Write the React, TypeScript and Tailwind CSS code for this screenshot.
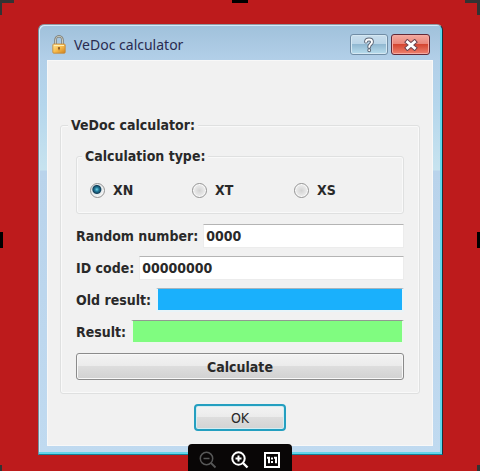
import { useState } from 'react'
import type { ReactNode } from 'react'

const TYPES = ['XN', 'XT', 'XS']

function LockIcon() {
  return (
    <svg width="14" height="19" viewBox="0 0 14 19" aria-hidden="true">
      <defs>
        <linearGradient id="lock-body" x1="0" y1="0" x2="1" y2="1">
          <stop offset="0" stopColor="#ffe9a0" />
          <stop offset="0.5" stopColor="#f7bc4c" />
          <stop offset="1" stopColor="#cf7f1c" />
        </linearGradient>
      </defs>
      <path d="M3.5 10V5a3.5 3.8 0 0 1 7 0v5" fill="none" stroke="#77776f" strokeWidth="2.4" />
      <path d="M3.5 10V5a3.5 3.8 0 0 1 7 0v5" fill="none" stroke="#d3d5c9" strokeWidth="0.9" />
      <rect x="0.8" y="9" width="12.4" height="9.2" rx="1" fill="url(#lock-body)" stroke="#c48734" strokeWidth="0.8" />
      <path d="M2 10.5h10" stroke="#fff0b8" strokeWidth="1" />
      <circle cx="7" cy="13" r="1.1" fill="#855322" />
      <path d="M7 13v2.2" stroke="#855322" strokeWidth="1" />
    </svg>
  )
}

function HelpIcon() {
  return (
    <svg width="14" height="16" viewBox="0 0 14 16" aria-hidden="true">
      <g fill="none" strokeLinecap="round" strokeLinejoin="round">
        <path d="M4 4.7C4.2 1.8 10 1.7 10 4.9c0 2.2-2.8 2.3-2.8 5M7.2 13.2v.1" stroke="#5c6675" strokeWidth="3.8" />
        <path d="M4 4.7C4.2 1.8 10 1.7 10 4.9c0 2.2-2.8 2.3-2.8 5M7.2 13.2v.1" stroke="#fff" strokeWidth="1.9" />
      </g>
    </svg>
  )
}

function CloseIcon() {
  return (
    <svg width="14" height="12" viewBox="0 0 14 12" aria-hidden="true">
      <path d="M3.5 3l7 6M10.5 3l-7 6" stroke="#6a4550" strokeWidth="4.8" strokeLinecap="square" />
      <path d="M3.5 3l7 6M10.5 3l-7 6" stroke="#fff" strokeWidth="2.8" strokeLinecap="square" />
    </svg>
  )
}

function ZoomIcon({ plus }: { plus?: boolean }) {
  return (
    <svg width="18" height="18" viewBox="0 0 18 18" fill="none" stroke="currentColor" aria-hidden="true">
      <circle cx="7.5" cy="7.5" r="6.2" strokeWidth={plus ? 2 : 1.5} />
      <path d="M12 12l4.5 4.5" strokeWidth={plus ? 2.4 : 1.8} />
      <path d="M4.5 7.5h6" strokeWidth={plus ? 2 : 1.5} />
      {plus && <path d="M7.5 4.5v6" strokeWidth="2" />}
    </svg>
  )
}

function ActualSizeIcon() {
  return (
    <svg width="18" height="18" viewBox="0 0 18 18" fill="none" stroke="currentColor" aria-hidden="true">
      <rect x="2" y="2" width="14" height="14" strokeWidth="2" />
      <path d="M4 6.8h2v5.4M11 6.8h2v5.4" strokeWidth="2" />
      <path d="M8 6.5h2v2H8zM8 10h2v2H8z" fill="currentColor" stroke="none" />
    </svg>
  )
}

function Row({ id, label, children }: { id: string; label: string; children: ReactNode }) {
  return (
    <div className="flex h-6 items-center gap-[5px]">
      <label htmlFor={id} className="shrink-0">
        {label}
      </label>
      {children}
    </div>
  )
}

/** Crop handles around the edge of the viewer. */
function Handles() {
  return (
    <div aria-hidden="true" className="pointer-events-none absolute inset-0 overflow-hidden">
      <div className="absolute top-0 left-0 h-[15px] w-[14px] border-t-3 border-l-2 border-[#333]" />
      <div className="absolute top-0 right-0 h-[15px] w-[15px] border-t-3 border-r-3 border-[#333]" />
      <div className="absolute bottom-0 left-0 h-[6px] w-[2px] bg-[#333]" />
      <div className="absolute right-0 bottom-0 h-[6px] w-[3px] bg-[#333]" />
      <div className="absolute top-0 left-1/2 h-[3px] w-4 -translate-x-1/2 bg-black" />
      <div className="absolute top-[232px] left-0 h-4 w-[3px] bg-black" />
      <div className="absolute top-[232px] right-0 h-4 w-[3px] bg-black" />
    </div>
  )
}

const field =
  'h-6 min-w-0 flex-1 border border-[#ececec] border-t-[#b4b4b4] bg-white px-[2px] outline-none'
const group = 'min-w-0 rounded-[3px] border border-[#dfe0e0] shadow-[inset_0_0_0_1px_#f9f9f9]'

export default function App() {
  const [type, setType] = useState('XN')
  const [random, setRandom] = useState('0000')
  const [code, setCode] = useState('00000000')

  return (
    <div className="relative min-h-screen bg-[#bd1b1c] pt-6 pr-[37px] pb-4 pl-[38px] font-['DejaVu_Sans_Condensed','DejaVu_Sans',sans-serif] text-[14px] text-[#292929]">
      <Handles />
      <main className="rounded-t-[6px] border border-t-[#8f9ba3] border-r-[#173540] border-b-[#13839a] border-l-[#758f9d] bg-[linear-gradient(180deg,#a0c1db_0px,#b2cfe8_34px,#b5d6ec_80px,#c7e3ef_145px,#b9d3eb_146px,#c0daf0_100%)] pr-[9px] pb-2 pl-2 shadow-[inset_-2px_-2px_0_#62d4ea,inset_1px_1px_0_#d5eafa]">
        <header className="flex h-[35px] items-center pt-1 pl-[5px]">
          <LockIcon />
          <h1 className="ml-2 flex-1 font-['Noto_Sans',sans-serif] text-[14px] leading-5 font-normal text-[#292b50]">
            VeDoc calculator
          </h1>
          <div className="flex gap-[3px] pr-[3px]">
            <button
              aria-label="Help"
              className="flex h-[21px] w-[38px] items-center justify-center rounded-[3px] border border-[#718da5] bg-[linear-gradient(180deg,#c9deec,#b9d4e7_48%,#91b8d1_50%,#b9deee)] shadow-[inset_0_0_0_1px_#d5e8f3]"
            >
              <HelpIcon />
            </button>
            <button
              aria-label="Close"
              className="flex h-[21px] w-[39px] items-center justify-center rounded-[3px] border border-[#622a38] bg-[linear-gradient(180deg,#f3aaa0,#e9867a_45%,#d44631_50%,#ef8270)] shadow-[inset_0_0_0_1px_#f4aaa2]"
            >
              <CloseIcon />
            </button>
          </div>
        </header>

        <form
          onSubmit={(e) => e.preventDefault()}
          className="bg-[#f1f1f1] pt-[55px] pr-[13px] pb-[15px] pl-[13px] shadow-[inset_0_0_0_1px_#f8f8f8]"
        >
          <fieldset className={`${group} px-[15px] pb-[13px] font-bold`}>
            <legend className="-ml-2 bg-[#f1f1f1] px-[3px] leading-5">VeDoc calculator:</legend>
            <fieldset className={`${group} mt-3 h-[67px] px-[13px]`}>
              <legend className="-ml-2 bg-[#f1f1f1] px-[3px] leading-[18px]">Calculation type:</legend>
              <div className="flex pt-[17px]">
                {TYPES.map((t) => (
                  <label key={t} className="flex w-[102px] shrink-0 items-center gap-2 leading-4 last:w-auto">
                    <input
                      type="radio"
                      name="type"
                      checked={type === t}
                      onChange={() => setType(t)}
                      className="size-[15px] appearance-none rounded-full border border-[#929292] bg-[radial-gradient(circle,#d2d2d2_0%,#e9e9e9_55%,#fafafa_65%)] checked:bg-[radial-gradient(circle_at_45%_42%,#75d3e7_0px,#217c9c_2px,#123f59_4px,#e4e9eb_5px,#f5f5f5_7px)]"
                    />
                    {t}
                  </label>
                ))}
              </div>
            </fieldset>

            <div className="mt-[10px] flex flex-col gap-2">
              <Row id="random" label="Random number:">
                <input id="random" value={random} onChange={(e) => setRandom(e.target.value)} className={field} />
              </Row>
              <Row id="code" label="ID code:">
                <input id="code" value={code} onChange={(e) => setCode(e.target.value)} className={field} />
              </Row>
              <Row id="old" label="Old result:">
                <input
                  id="old"
                  readOnly
                  className="h-6 min-w-0 flex-1 border-2 border-t border-[#e9f4f8] border-t-[#a5b5be] bg-[#1ab0fc] outline-none"
                />
              </Row>
              <Row id="result" label="Result:">
                <input
                  id="result"
                  readOnly
                  className="h-6 min-w-0 flex-1 border-2 border-t border-[#edf6ed] border-t-[#919a91] bg-[#80fc80] outline-none"
                />
              </Row>
            </div>

            <button className="mt-[9px] h-[27px] w-full rounded-[3px] border border-[#8b8b8b] bg-[linear-gradient(180deg,#f3f3f3,#ebebeb_48%,#dddddd_50%,#d1d1d1)] leading-5 shadow-[inset_0_0_0_1px_#f8f8f8]">
              Calculate
            </button>
          </fieldset>

          <div className="mt-[10px] flex justify-center">
            <button className="h-[27px] w-[92px] rounded-[4px] border-2 border-[#249fc0] bg-[linear-gradient(180deg,#f3f3f3,#ebebeb_48%,#dddddd_50%,#d3d3d3)] leading-5 shadow-[inset_0_0_0_1px_#d3edf3]">
              OK
            </button>
          </div>
        </form>
      </main>

      <div className="fixed bottom-0 left-1/2 flex h-[27px] -translate-x-1/2 items-center gap-[14px] rounded-t-[4px] bg-[#090606] px-[11px] pt-1 text-white">
        <button aria-label="Zoom out" className="text-[#575757]">
          <ZoomIcon />
        </button>
        <button aria-label="Zoom in">
          <ZoomIcon plus />
        </button>
        <button aria-label="Actual size">
          <ActualSizeIcon />
        </button>
      </div>
    </div>
  )
}
